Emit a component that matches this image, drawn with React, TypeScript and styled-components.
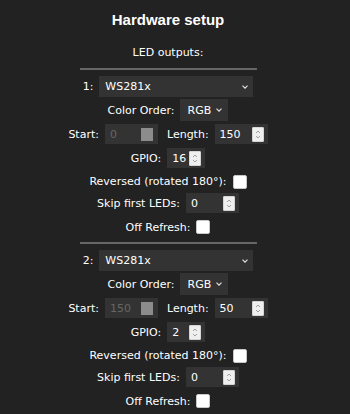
import React from 'react';
import styled, { createGlobalStyle } from 'styled-components';

const GlobalStyle = createGlobalStyle`
  html, body {
    margin: 0;
    padding: 0;
    background: #222;
  }
  body {
    font-family: 'DejaVu Sans', Verdana, sans-serif;
    color: #fff;
  }
`;

const Page = styled.div`
  width: 336px;
  display: flex;
  flex-direction: column;
  align-items: center;
  font-size: 11px;
`;

const Title = styled.h2`
  margin: 0;
  height: 39px;
  line-height: 39px;
  font-family: 'Liberation Sans', Arial, sans-serif;
  font-size: 15px;
  font-weight: 700;
`;

const Subtitle = styled.div`
  height: 28px;
  line-height: 28px;
  margin-bottom: 1px;
`;

const Divider = styled.hr`
  width: 177px;
  height: 2px;
  margin: 0;
  border: 0;
  background: #666;
`;

const OutputBlock = styled.div`
  display: flex;
  flex-direction: column;
  align-items: center;
  padding: 5px 0 1px;
`;

const Row = styled.div<{ $h: number }>`
  display: flex;
  align-items: center;
  justify-content: center;
  gap: 6px;
  height: ${p => p.$h}px;
  white-space: nowrap;
`;

const Label = styled.span`
  line-height: 1;
`;

const SelectBox = styled.span<{ $w: number; $h: number; $pl: number; $pr: number }>`
  display: inline-flex;
  align-items: center;
  box-sizing: border-box;
  width: ${p => p.$w}px;
  height: ${p => p.$h}px;
  padding: 0 ${p => p.$pr}px 0 ${p => p.$pl}px;
  background: #333;
`;

const NativeSelect = styled.select`
  appearance: none;
  -webkit-appearance: none;
  flex: 1;
  min-width: 0;
  height: 100%;
  padding: 0;
  border: 0;
  outline: none;
  background: transparent;
  color: #fff;
  font: inherit;
`;

const Field = styled.span<{ $w: number; $pr: number }>`
  display: inline-flex;
  align-items: center;
  box-sizing: border-box;
  width: ${p => p.$w}px;
  height: 20px;
  padding: 0 ${p => p.$pr}px 0 5px;
  background: #333;
`;

const NumInput = styled.input`
  appearance: textfield;
  -moz-appearance: textfield;
  flex: 1;
  min-width: 0;
  padding: 0;
  border: 0;
  outline: none;
  background: transparent;
  color: #fff;
  font: inherit;

  &::-webkit-inner-spin-button,
  &::-webkit-outer-spin-button {
    -webkit-appearance: none;
    margin: 0;
  }

  &:disabled {
    color: #666;
  }
`;

const Spinner = styled.span`
  display: flex;
  align-items: center;
  justify-content: center;
  box-sizing: border-box;
  width: 12px;
  height: 15px;
  background: #efefef;
  border: 1px solid #d4d4d4;
  border-radius: 1px;
`;

const DeadSpinner = styled.span`
  width: 12px;
  height: 13px;
  background: #8c8c8c;
`;

const Check = styled.input`
  appearance: none;
  -webkit-appearance: none;
  box-sizing: border-box;
  width: 14px;
  height: 14px;
  margin: 0;
  background: #fff;
  border: 1px solid #c8c8c8;
  border-radius: 2px;
`;

const Chevron = () => (
  <svg width="6" height="4" viewBox="0 0 6 4">
    <polyline points="0.5,0.7 3,3.2 5.5,0.7" fill="none" stroke="#ddd" strokeWidth="1.2" />
  </svg>
);

const SpinArrows = () => (
  <svg width="6" height="11" viewBox="0 0 6 11">
    <polyline points="1,4 3,2 5,4" fill="none" stroke="#a0a0a0" strokeWidth="1" />
    <polyline points="1,7 3,9 5,7" fill="none" stroke="#a0a0a0" strokeWidth="1" />
  </svg>
);

const NumberField: React.FC<{ value: number; width: number; disabled?: boolean }> = ({ value, width, disabled }) => (
  <Field $w={width} $pr={disabled ? 5 : 4}>
    <NumInput type="number" defaultValue={value} disabled={disabled} />
    {disabled ? <DeadSpinner /> : <Spinner><SpinArrows /></Spinner>}
  </Field>
);

type Output = { n: number; start: number; len: number; gpio: number };

const outputs: Output[] = [
  { n: 1, start: 0, len: 150, gpio: 16 },
  { n: 2, start: 150, len: 50, gpio: 2 },
];

const LedOutput: React.FC<{ o: Output }> = ({ o }) => (
  <OutputBlock>
    <Row $h={23}>
      <Label>{o.n}:</Label>
      <SelectBox $w={154} $h={21} $pl={6} $pr={5}>
        <NativeSelect defaultValue="ws">
          <option value="ws">WS281x</option>
        </NativeSelect>
        <Chevron />
      </SelectBox>
    </Row>
    <Row $h={24}>
      <Label>Color Order:</Label>
      <SelectBox $w={48} $h={22} $pl={7} $pr={6}>
        <NativeSelect defaultValue="rgb">
          <option value="rgb">RGB</option>
        </NativeSelect>
        <Chevron />
      </SelectBox>
    </Row>
    <Row $h={24}>
      <Label>Start:</Label>
      <NumberField value={o.start} width={53} disabled />
      <Label style={{ marginLeft: 3 }}>Length:</Label>
      <NumberField value={o.len} width={53} />
    </Row>
    <Row $h={24}>
      <Label>GPIO:</Label>
      <NumberField value={o.gpio} width={38} />
    </Row>
    <Row $h={23}>
      <Label>Reversed (rotated 180°):</Label>
      <Check type="checkbox" />
    </Row>
    <Row $h={20}>
      <Label>Skip first LEDs:</Label>
      <NumberField value={0} width={53} />
    </Row>
    <Row $h={28}>
      <Label>Off Refresh:</Label>
      <Check type="checkbox" />
    </Row>
  </OutputBlock>
);

const App: React.FC = () => (
  <Page>
    <GlobalStyle />
    <Title>Hardware setup</Title>
    <Subtitle>LED outputs:</Subtitle>
    {outputs.map(o => (
      <React.Fragment key={o.n}>
        <Divider />
        <LedOutput o={o} />
      </React.Fragment>
    ))}
  </Page>
);

export default App;
